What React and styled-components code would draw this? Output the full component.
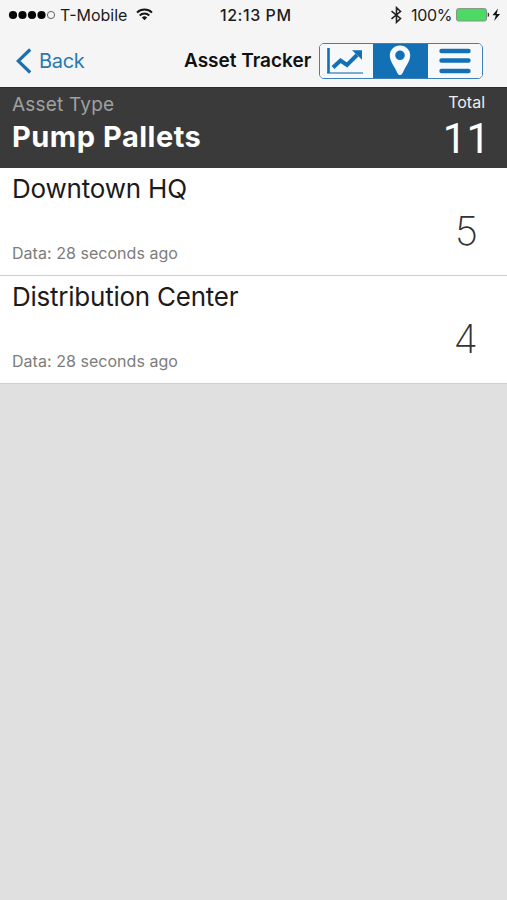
import React from "react";
import styled, { createGlobalStyle } from "styled-components";

const GlobalStyle = createGlobalStyle`
  * { box-sizing: border-box; }
  body {
    margin: 0;
    background: #e0e0e0;
    font-family: Inter, "Liberation Sans", sans-serif;
  }
`;

const Screen = styled.main`
  width: 507px;
  height: 900px;
  display: flex;
  flex-direction: column;
  background: #e0e0e0;
  overflow: hidden;
  white-space: nowrap;
`;

const TopBars = styled.header`
  height: 87px;
  background: #f5f5f5;
`;

const StatusBar = styled.div`
  height: 29px;
  display: grid;
  grid-template-columns: 220px 1fr 117px;
  align-items: center;
  color: #1c1c1c;
`;

const StatusGroup = styled.div`
  display: flex;
  align-items: center;
`;

const Carrier = styled.span`
  width: 76px;
  margin-left: 4px;
  font-size: 16px;
  letter-spacing: 0;
`;

const Clock = styled.time`
  font-size: 16px;
  font-weight: 500;
  letter-spacing: 0.55px;
`;

const Charge = styled.span`
  width: 44px;
  margin-left: 9px;
  font-size: 16px;
  letter-spacing: -0.3px;
`;

const NavBar = styled.nav`
  height: 58px;
  display: flex;
  align-items: center;
  padding: 5px 24px 0 16px;
`;

const BackButton = styled.button`
  width: 168px;
  display: flex;
  align-items: center;
  gap: 7px;
  border: 0;
  padding: 0;
  background: none;
  color: #2878b4;
  font: 400 20px Inter, sans-serif;
  letter-spacing: -0.3px;
`;

const Title = styled.h1`
  width: 135px;
  margin: 0;
  font-size: 19px;
  font-weight: 600;
  letter-spacing: 0;
  color: #111;
`;

const Segments = styled.div`
  width: 164px;
  height: 36px;
  display: grid;
  grid-template-columns: 53px 55px 1fr;
  border: 1px solid #3e81b2;
  border-radius: 5px;
  overflow: hidden;
`;

const Segment = styled.button`
  display: flex;
  align-items: center;
  justify-content: center;
  border: 0;
  padding: 0 ${({ $inset }) => $inset || "0"} 0 0;
  color: #1470b5;
  background: ${({ $active }) => ($active ? "#1470b5" : "#f6f8fa")};
`;

const Summary = styled.section`
  height: 81px;
  display: flex;
  justify-content: space-between;
  padding: 0 22px 0 12px;
  background: #3a3a3a;
  border-top: 1px solid #2c2c2c;
  color: #fff;
`;

const SummaryLabel = styled.div`
  height: 32px;
  line-height: 33px;
  font-size: 19px;
  letter-spacing: 0.2px;
  color: #a0a0a0;
`;

const SummaryName = styled.div`
  line-height: 34px;
  font-size: 29px;
  font-weight: 700;
  letter-spacing: 0.5px;
`;

const Total = styled.div`
  display: flex;
  flex-direction: column;
  align-items: flex-end;
`;

const TotalLabel = styled.div`
  height: 28px;
  line-height: 28px;
  font-size: 16px;
  color: #eee;
`;

const TotalValue = styled.div`
  line-height: 46px;
  font-family: Roboto, Arial, sans-serif;
  font-size: 42px;
  font-kerning: none;
  margin-right: -5px;
`;

const Row = styled.article`
  height: 108px;
  display: flex;
  justify-content: space-between;
  padding: 0 29px 0 12px;
  background: #fff;
  border-bottom: 1px solid #cfcfcf;
`;

const RowText = styled.div`
  display: flex;
  flex-direction: column;
  justify-content: space-between;
  padding-bottom: 12px;
`;

const Place = styled.h2`
  margin: 0;
  line-height: 42px;
  font-size: 26px;
  font-weight: 400;
  letter-spacing: ${({ $tracking }) => $tracking};
  color: #1b1b1b;
`;

const Age = styled.div`
  line-height: 20px;
  font-size: 16px;
  letter-spacing: 0.04px;
  color: #7c7c7c;
`;

const Count = styled.div`
  padding-top: 38px;
  line-height: 50px;
  font-size: 40px;
  font-weight: 200;
  color: #333;
`;

const rows = [
  { place: "Downtown HQ", count: 5, tracking: "-0.2px" },
  { place: "Distribution Center", count: 4, tracking: "-0.24px" },
];

const SignalIcon = () => (
  <svg width="56" height="12" viewBox="0 0 56 12">
    {[13, 22.5, 32, 41.5].map((x) => (
      <circle key={x} cx={x} cy="6" r="4.1" fill="#050505" />
    ))}
    <circle cx="51" cy="6" r="3.6" fill="none" stroke="#555" strokeWidth="0.9" />
  </svg>
);

const WifiIcon = () => (
  <svg width="17" height="13" viewBox="0 0 17 13" fill="none" stroke="#161616" strokeWidth="2">
    <path d="M1 4.6a10.8 10.8 0 0 1 15 0M3.7 7.5a7 7 0 0 1 9.6 0" />
    <path d="M5.8 9.4a4 4 0 0 1 5.4 0L8.5 12.2Z" fill="#161616" stroke="none" />
  </svg>
);

const BluetoothIcon = () => (
  <svg width="12" height="18" viewBox="0 0 12 18" fill="none" stroke="#222" strokeWidth="1.6">
    <path d="m1.5 5.2 9 7.3-4 3.8V1.700l4 3.800-9 7.300" />
  </svg>
);

const BatteryIcon = () => (
  <svg width="46" height="16" viewBox="0 0 46 16">
    <rect x="1.500" y="1.600" width="30" height="12.400" rx="2" fill="#4cd964" stroke="#879488" strokeWidth="1" />
    <path d="M32.700 5.500c2 .5 2 4 0 4.500Z" fill="#333" />
    <path d="M43 1.500 37.500 8.300h3.400L39.100 14l6-7h-3.500Z" fill="#111" />
  </svg>
);

const BackIcon = () => (
  <svg width="16" height="26" viewBox="0 0 16 26" fill="none" stroke="#1d70ab" strokeWidth="3.2">
    <path d="M14.200 1.500 2.200 13l12 11.500" />
  </svg>
);

const ChartIcon = () => (
  <svg width="38" height="28" viewBox="0 0 38 28" fill="none" stroke="currentColor">
    <path d="M2.500 1v25" strokeWidth="2.600" />
    <path d="M1 26h36" strokeWidth="1.400" opacity="0.75" />
    <path d="m7 20.500 7.500-7 6.500 4.500L31 8" strokeWidth="4" />
    <path d="M26 3.300h10v9.500Z" fill="currentColor" stroke="none" />
  </svg>
);

const PinIcon = () => (
  <svg width="22" height="31" viewBox="0 0 22 31">
    <path
      d="M11 .5C5 .5.8 5 .8 10.500c0 5 3.200 9 6 14.200 1 1.800 1.800 5.300 4.200 5.300s3.200-3.500 4.200-5.300c2.800-5.200 6-9.200 6-14.200C21.200 5 17 .5 11 .5Zm0 5a4.800 4.800 0 1 1 0 9.600 4.800 4.800 0 0 1 0-9.600Z"
      fill="#f7fafc"
      fillRule="evenodd"
    />
  </svg>
);

const MenuIcon = () => (
  <svg width="32" height="26" viewBox="0 0 32 26" stroke="currentColor" strokeWidth="4.400" strokeLinecap="round">
    <path d="M2.500 3h27M2.500 12.500h27M2.500 23h27" />
  </svg>
);

export default function App() {
  return (
    <>
      <GlobalStyle />
      <Screen>
        <TopBars>
          <StatusBar>
            <StatusGroup>
              <SignalIcon />
              <Carrier>T-Mobile</Carrier>
              <WifiIcon />
            </StatusGroup>
            <Clock>12:13 PM</Clock>
            <StatusGroup>
              <BluetoothIcon />
              <Charge>100%</Charge>
              <BatteryIcon />
            </StatusGroup>
          </StatusBar>
          <NavBar>
            <BackButton>
              <BackIcon />
              Back
            </BackButton>
            <Title>Asset Tracker</Title>
            <Segments>
              <Segment aria-label="Chart" $inset="3px"><ChartIcon /></Segment>
              <Segment aria-label="Map" $active $inset="2px"><PinIcon /></Segment>
              <Segment aria-label="List"><MenuIcon /></Segment>
            </Segments>
          </NavBar>
        </TopBars>
        <Summary>
          <div>
            <SummaryLabel>Asset Type</SummaryLabel>
            <SummaryName>Pump Pallets</SummaryName>
          </div>
          <Total>
            <TotalLabel>Total</TotalLabel>
            <TotalValue>11</TotalValue>
          </Total>
        </Summary>
        {rows.map(({ place, count, tracking }) => (
          <Row key={place}>
            <RowText>
              <Place $tracking={tracking}>{place}</Place>
              <Age>Data: 28 seconds ago</Age>
            </RowText>
            <Count>{count}</Count>
          </Row>
        ))}
      </Screen>
    </>
  );
}
